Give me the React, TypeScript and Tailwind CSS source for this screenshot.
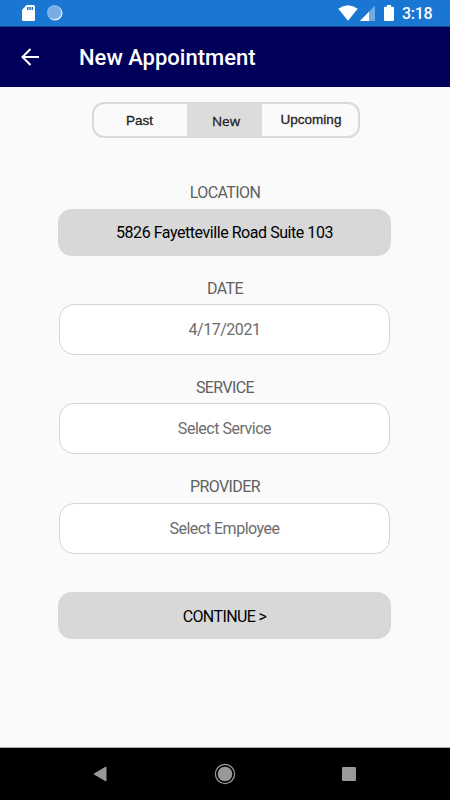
function StatusBar() {
  return (
    <div className="flex h-[26px] shrink-0 items-center bg-[#1976d2]">
      <svg className="ml-[22px] h-4 w-[13px]" viewBox="0 0 13 16">
        <path d="M4.7 0H11.5Q13 0 13 1.5V14.5Q13 16 11.5 16H1.5Q0 16 0 14.5V4.8Z" fill="#fff" />
        <path d="M5 2H6.5V5H5ZM7.3 2H8.8V5H7.3ZM9.6 2H11.1V5H9.6Z" fill="#1976d2" />
      </svg>
      <svg className="ml-3 h-4 w-4" viewBox="0 0 16 16">
        <circle cx="8" cy="8" r="7.5" fill="#fff" />
        <circle cx="7.3" cy="7.3" r="7.3" fill="#75ace4" />
        <circle cx="7.3" cy="7.3" r="6" fill="none" stroke="#a3c8ee" strokeWidth="1" strokeDasharray="1 1" />
      </svg>
      <svg className="ml-auto h-4 w-5" viewBox="0 0 20 16">
        <path d="M0.3 3.8Q10 -3.4 19.7 3.8L10 15.7Z" fill="#fff" />
      </svg>
      <svg className="ml-[2px] h-4 w-[15px]" viewBox="0 0 15 16">
        <path d="M15 0.5V16H0Z" fill="#70aae3" />
        <path d="M9 6.7V16H0Z" fill="#fff" />
      </svg>
      <svg className="ml-[9px] h-4 w-[10px]" viewBox="0 0 10 16">
        <path d="M3 0H7V1.7H9Q10 1.7 10 2.7V15Q10 16 9 16H1Q0 16 0 15V2.7Q0 1.7 1 1.7H3Z" fill="#fff" />
      </svg>
      <span className="mr-[17px] ml-2 w-[31px] pt-[2px] text-[16px] leading-6 font-medium tracking-[-0.3px] whitespace-nowrap text-white">3:18</span>
    </div>
  );
}

function Header() {
  return (
    <header className="flex h-[61px] shrink-0 items-center border-t border-[#104789] bg-[#00005b]">
      <svg className="ml-[21px] h-[18px] w-[18px]" viewBox="0 0 18 18" fill="none" stroke="#fff" strokeWidth="2">
        <path d="M18 9H2M9.5 1L1.5 9L9.5 17" />
      </svg>
      <h1 className="ml-10 pt-px text-[22px] leading-7 font-medium text-white">New Appointment</h1>
    </header>
  );
}

function Tabs() {
  return (
    <div className="mt-[15px] ml-0.5 flex h-9 w-[268px] overflow-hidden rounded-[12px] border-2 border-[#d9d9d9] font-['Liberation_Sans',sans-serif] text-[13.5px] leading-4 text-[#222] [-webkit-text-stroke:0.3px_#222]">
      <button className="w-[93px] pt-0.5 pr-0.5">Past</button>
      <button className="w-[75px] bg-[#dcdcdc] pt-px pl-[3px] font-['Open_Sans',sans-serif] text-[13.5px]">New</button>
      <button className="flex-1 pl-0.5">Upcoming</button>
    </div>
  );
}

function Field({ label, value }: { label: string; value: string }) {
  return (
    <div className="flex h-[99.2px] flex-col items-center">
      <span className="h-[27px] pt-[1.6px] text-[16px] leading-5 tracking-[-0.6px] text-[#606060]">{label}</span>
      <button className="mr-px h-[51px] w-[331px] rounded-[15px] border-[1.5px] border-[#d4d4d4] bg-white pt-px text-[16px] tracking-[-0.48px] text-[#6c6c6c]">{value}</button>
    </div>
  );
}

export default function App() {
  return (
    <div className="flex h-[800px] w-[450px] flex-col bg-[#fafafa] font-[Roboto,sans-serif]">
      <StatusBar />
      <Header />
      <main className="flex flex-1 flex-col items-center">
        <Tabs />
        <span className="mt-[45px] h-[26px] text-[16px] leading-5 tracking-[-0.6px] text-[#606060]">LOCATION</span>
        <button className="mr-px mb-[21.3px] h-[47px] w-[333px] rounded-[14px] bg-[#d8d8d8] pt-px text-[16px] tracking-[-0.45px] text-black">5826 Fayetteville Road Suite 103</button>
        <Field label="DATE" value="4/17/2021" />
        <Field label="SERVICE" value="Select Service" />
        <Field label="PROVIDER" value="Select Employee" />
        <button className="mt-[17.1px] mr-px h-[47px] w-[333px] rounded-[14px] bg-[#d8d8d8] pt-[3px] text-[16px] tracking-[-0.6px] text-black">CONTINUE &gt;</button>
      </main>
      <nav className="flex h-[53px] shrink-0 items-center border-t border-[#aaa] bg-black">
        <svg className="ml-[93px] h-4 w-[14px]" viewBox="0 0 14 16"><path d="M13 1V15L1 8Z" fill="#999" stroke="#999" strokeLinejoin="round" /></svg>
        <svg className="ml-[107px] h-[22px] w-[22px]" viewBox="0 0 22 22"><circle cx="11" cy="11" r="9.6" fill="none" stroke="#999" strokeWidth="1.2" /><circle cx="11" cy="11" r="7.3" fill="#999" /></svg>
        <span className="ml-[106px] h-[14px] w-[14px] rounded-[1px] bg-[#999]" />
      </nav>
    </div>
  );
}
